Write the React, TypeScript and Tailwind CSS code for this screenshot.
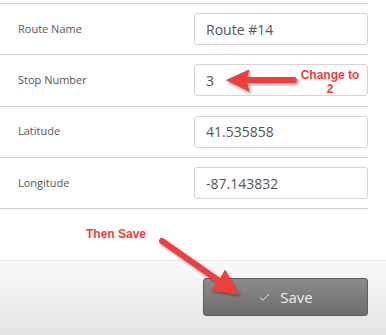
import { Check } from "lucide-react";

const rows = [
  { label: "Route Name", value: "Route #14" },
  { label: "Stop Number", value: "3" },
  { label: "Latitude", value: "41.535858" },
  { label: "Longitude", value: "-87.143832" },
];

export default function App() {
  return (
    <div className="relative h-[335px] w-[386px] overflow-hidden bg-white font-['Open_Sans',sans-serif]">
      <div className="w-[368px] pt-[3px]">
        <div className="border-t border-[#cfcfcf]">
          {rows.map((row) => (
            <div
              key={row.label}
              className="flex h-[51.3px] items-center justify-between border-b border-[#cfcfcf] pl-[18px]"
            >
              <span className="text-[11px] text-[#555]">{row.label}</span>
              <div className="flex h-[32px] w-[174px] items-center rounded-[3px] border border-[#d4d4d4] px-[11px] text-[14px] text-[#555]">
                {row.value}
              </div>
            </div>
          ))}
        </div>
      </div>

      <div className="mt-[51px] flex h-[76px] justify-end border-t border-[#ececec] bg-gradient-to-b from-[#f9f9f9] to-[#e4e4e4] pr-[18px] pt-[17px]">
        <button className="flex h-[38px] w-[165px] items-center justify-center gap-[9px] rounded-[3px] border border-[#5e5e5e] bg-gradient-to-b from-[#8c8c8c] to-[#6c6c6c] text-[15px] text-[#ededed]">
          <Check className="h-[13px] w-[13px]" strokeWidth={1.75} />
          Save
        </button>
      </div>

      <svg className="pointer-events-none absolute inset-0" width="386" height="335">
        <defs>
          <filter id="sh" x="-20%" y="-20%" width="140%" height="140%">
            <feDropShadow dx="1.5" dy="2" stdDeviation="1.2" floodColor="#000" floodOpacity="0.35" />
          </filter>
        </defs>
        <g filter="url(#sh)" fill="#f03c3c" stroke="#f03c3c" strokeLinecap="round" strokeLinejoin="round">
          <line x1="294" y1="80" x2="246" y2="80" strokeWidth="6" />
          <polygon points="227,80 249,70 246,80 249,91" strokeWidth="1" />
          <line x1="162" y1="241" x2="220" y2="281.5" strokeWidth="6" />
          <polygon points="238,294 211.5,290 219,281 225,270.5" strokeWidth="1" />
        </g>
      </svg>

      <div className="absolute left-[300px] top-[68px] w-[60px] text-center font-['Liberation_Sans',Arial,sans-serif] text-[12px] font-bold leading-[14px] text-[#f03c3c]">
        Change to
        <br />2
      </div>
      <div className="absolute left-[86px] top-[227px] font-['Liberation_Sans',Arial,sans-serif] text-[12px] font-bold leading-[14px] text-[#f03c3c]">
        Then Save
      </div>
    </div>
  );
}
